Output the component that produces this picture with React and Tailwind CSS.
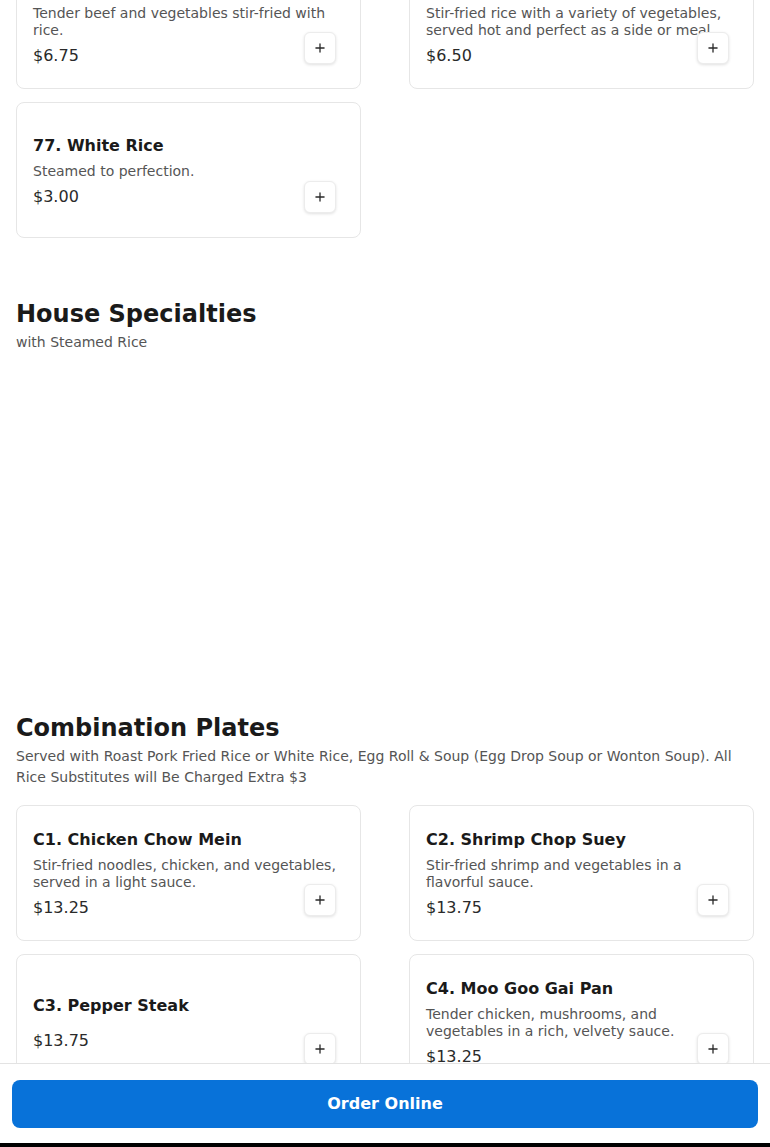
import { Plus } from 'lucide-react';

const topItems = [
    { name: '75. Beef Fried Rice', desc: 'Tender beef and vegetables stir-fried with rice.', price: '6.75' },
    { name: '76. Vegetable Fried Rice', desc: 'Stir-fried rice with a variety of vegetables, served hot and perfect as a side or meal.', price: '6.50' },
    { name: '77. White Rice', desc: 'Steamed to perfection.', price: '3.00' },
];

const combos = [
    { name: 'C1. Chicken Chow Mein', desc: 'Stir-fried noodles, chicken, and vegetables, served in a light sauce.', price: '13.25' },
    { name: 'C2. Shrimp Chop Suey', desc: 'Stir-fried shrimp and vegetables in a flavorful sauce.', price: '13.75' },
    { name: 'C3. Pepper Steak', desc: '', price: '13.75' },
    { name: 'C4. Moo Goo Gai Pan', desc: 'Tender chicken, mushrooms, and vegetables in a rich, velvety sauce.', price: '13.25' },
    { name: 'C5. Sweet and Sour Chicken', desc: 'Crispy chicken with sweet and sour sauce.', price: '13.25' },
    { name: 'C6. Beef with Broccoli', desc: 'Tender beef and broccoli in a savory brown sauce.', price: '13.75' },
];

function ItemCard({ item }) {
    return (
        <div className="relative flex flex-col justify-center min-h-[136px] border border-[#e6e6e6] rounded-lg bg-white px-4 pt-[17px] pb-[15px]">
            <h3 className="text-[16px] leading-[24px] font-bold text-[#1a1a1a] mb-[5px]">{item.name}</h3>
            {item.desc ? (
                <p className="text-[14px] leading-[17px] text-[#555555]">{item.desc}</p>
            ) : (
                <div className="h-[1px]" />
            )}
            <p className="text-[16px] leading-[24px] text-[#2a2a2a] mt-[5px]">${item.price}</p>
            {/* botão de adicionar fica por cima do texto */}
            <button className="absolute bottom-6 right-6 w-8 h-8 flex items-center justify-center rounded-md bg-white border border-[#ececec] shadow-[0_1px_3px_rgba(0,0,0,0.12)] text-[#2a2a2a]">
                <Plus size={14} strokeWidth={2.25} />
            </button>
        </div>
    );
}

export default function App() {
    return (
        <div className="min-h-screen bg-white font-['DejaVu_Sans',sans-serif] overflow-hidden">
            <div className="px-4 pb-[120px]">

                {/* RESTO DA SEÇÃO ANTERIOR */}
                <div className="grid grid-cols-2 gap-x-12 gap-y-[13px] -mt-[47px]">
                    {topItems.map((item) => <ItemCard key={item.name} item={item} />)}
                </div>

                {/* HOUSE SPECIALTIES */}
                <section className="mt-[58px]">
                    <h2 className="text-[24px] leading-[36px] font-bold text-[#1a1a1a]">House Specialties</h2>
                    <p className="text-[14px] leading-[21px] text-[#555555]">with Steamed Rice</p>
                    <div className="h-[357px]" />
                </section>

                {/* COMBINATION PLATES */}
                <section>
                    <h2 className="text-[24px] leading-[36px] font-bold text-[#1a1a1a]">Combination Plates</h2>
                    <p className="text-[14px] leading-[21px] text-[#555555] mb-[17px]">
                        Served with Roast Pork Fried Rice or White Rice, Egg Roll &amp; Soup (Egg Drop Soup or Wonton Soup). All Rice Substitutes will Be Charged Extra $3
                    </p>
                    <div className="grid grid-cols-2 gap-x-12 gap-y-[13px]">
                        {combos.map((item) => <ItemCard key={item.name} item={item} />)}
                    </div>
                </section>
            </div>

            {/* BARRA FIXA */}
            <div className="fixed bottom-0 left-0 right-0">
                <div className="bg-white border-t border-[#e3e3e3] px-3 pt-4 pb-[15px]">
                    <button className="w-full h-12 rounded-lg bg-[#0872d9] text-white text-[16px] font-bold">
                        Order Online
                    </button>
                </div>
                <div className="h-1 bg-black" />
            </div>
        </div>
    );
}
